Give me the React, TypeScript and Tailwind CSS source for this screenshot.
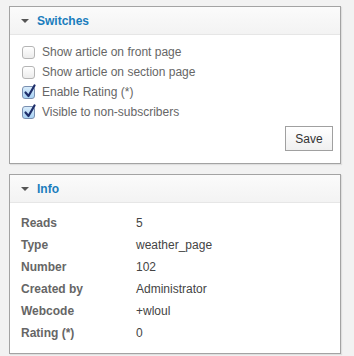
import React from 'react';

interface PanelProps {
  title: string;
  children: React.ReactNode;
}

const Panel = ({ title, children }: PanelProps) => (
  <div className="bg-white border border-[#a3a3a3] shadow-[1px_1px_1px_rgba(0,0,0,0.08)]">
    <div className="h-[28px] flex items-center pl-[11px] bg-gradient-to-b from-[#fbfbfb] to-[#f3f3f3] border-b border-[#e6e6e6]">
      <span className="w-0 h-0 border-l-[4px] border-r-[4px] border-t-[4px] border-l-transparent border-r-transparent border-t-[#555]" />
      <span className="ml-[8px] text-[12px] font-bold text-[#1a7dbd]">{title}</span>
    </div>
    {children}
  </div>
);

const Checkbox = ({ checked }: { checked: boolean }) => (
  <span
    className={`relative w-[13px] h-[13px] rounded-[3px] border ${
      checked ? 'border-[#7a8fb0] bg-gradient-to-b from-[#d8ecfb] to-[#a9d2f4]' : 'border-[#b5b5b5] bg-gradient-to-b from-[#ffffff] to-[#ececec]'
    }`}
  >
    {checked && (
      <svg className="absolute left-[1px] -top-[3px]" width="12" height="14" viewBox="0 0 12 14">
        <path d="M1.5 8.5 L4.5 12 L10.5 1.5" fill="none" stroke="#1f2f6b" strokeWidth="2.2" strokeLinecap="round" strokeLinejoin="round" />
      </svg>
    )}
  </span>
);

const switches = [
  { label: 'Show article on front page', checked: false },
  { label: 'Show article on section page', checked: false },
  { label: 'Enable Rating (*)', checked: true },
  { label: 'Visible to non-subscribers', checked: true },
];

const info = [
  ['Reads', '5'],
  ['Type', 'weather_page'],
  ['Number', '102'],
  ['Created by', 'Administrator'],
  ['Webcode', '+wloul'],
  ['Rating (*)', '0'],
];

export default function App() {
  return (
    <div
      className="w-[354px] h-[356px] bg-[#f2f2f2] pt-[6px] pl-[9px] pr-[13px] flex flex-col gap-[10px]"
      style={{ fontFamily: '"Liberation Sans", Arial, sans-serif' }}
    >
      <Panel title="Switches">
        <div className="pt-[7px] pl-[12px] pr-[7px] pb-[12px]">
          {switches.map((s) => (
            <label key={s.label} className="h-[20px] flex items-center gap-[7px] text-[12px] text-[#666]">
              <Checkbox checked={s.checked} />
              <span>{s.label}</span>
            </label>
          ))}
          <div className="flex justify-end mt-[4px]">
            <button className="w-[48px] h-[25px] border border-[#a0a0a0] bg-gradient-to-b from-[#ffffff] to-[#f0f0f0] text-[12px] text-[#333]">
              Save
            </button>
          </div>
        </div>
      </Panel>
      <Panel title="Info">
        <div className="pt-[9px] pb-[9px] pl-[11px]">
          {info.map(([k, v]) => (
            <div key={k} className="h-[22px] flex items-center text-[12px]">
              <span className="w-[115px] font-bold text-[#666]">{k}</span>
              <span className="text-[#444]">{v}</span>
            </div>
          ))}
        </div>
      </Panel>
    </div>
  );
}
